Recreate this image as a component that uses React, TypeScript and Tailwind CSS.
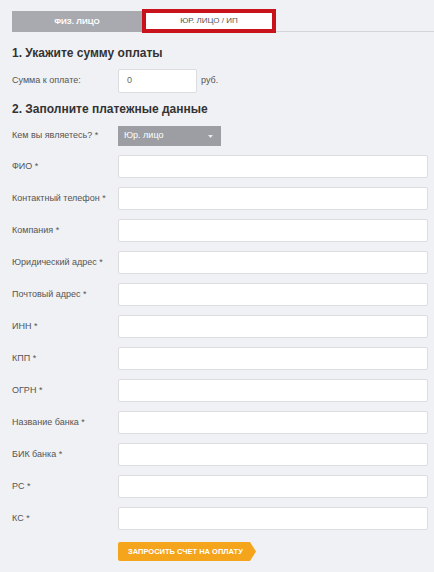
const fields = [
  "ФИО *",
  "Контактный телефон *",
  "Компания *",
  "Юридический адрес *",
  "Почтовый адрес *",
  "ИНН *",
  "КПП *",
  "ОГРН *",
  "Название банка *",
  "БИК банка *",
  "РС *",
  "КС *",
];

const Row = ({ label, children }: { label: string; children: React.ReactNode }) => {
  return (
    <div className="flex items-center">
      <div className="w-[106px] shrink-0 text-[9px] text-[#555]">{label}</div>
      {children}
    </div>
  );
};

export default function App() {
  return (
    <div
      className="w-[434px] h-[572px] bg-[#f0f1f4] text-[#333] overflow-hidden"
      style={{ fontFamily: '"Liberation Sans", Arial, sans-serif' }}
    >
      {/* tabs */}
      <div className="flex items-end pl-3 pt-[9px]">
        <div className="w-[130px] h-[21px] mb-[1px] bg-[#a8aaaf] flex items-center justify-center text-[8px] font-bold text-white uppercase">
          Физ. лицо
        </div>
        <div className="w-[134px] h-[24px] border-4 border-[#c8121c] bg-white flex items-center justify-center text-[8px] text-[#555] uppercase">
          Юр. лицо / ИП
        </div>
        <div className="flex-1 h-px bg-[#d3d5d9] mb-[1px]" />
      </div>

      <div className="pl-3 pr-[6px]">
        <h2 className="mt-[12px] text-[12px] font-bold leading-4 text-[#333]">
          1. Укажите сумму оплаты
        </h2>
        <div className="mt-[8px]">
          <Row label="Сумма к оплате:">
            <div className="w-[79px] h-[24px] bg-white border border-[#dcdde1] rounded-[2px] flex items-center pl-2 text-[9px] text-[#666]">
              0
            </div>
            <span className="ml-[4px] text-[9px] text-[#555]">руб.</span>
          </Row>
        </div>

        <h2 className="mt-[8px] text-[12px] font-bold leading-4 text-[#333]">
          2. Заполните платежные данные
        </h2>

        <div className="mt-[9px]">
          <Row label="Кем вы являетесь? *">
            <div className="w-[103px] h-[20px] bg-[#9c9ea3] flex items-center justify-between pl-[6px] pr-[8px] text-[9px] text-white">
              <span>Юр. лицо</span>
              <svg width="5" height="3" viewBox="0 0 5 3">
                <path d="M0 0h5L2.5 3z" fill="#e8e9eb" />
              </svg>
            </div>
          </Row>
        </div>

        <div className="mt-[9px] flex flex-col gap-[9px]">
          {fields.map((f) => (
            <Row key={f} label={f}>
              <div className="flex-1 h-[23px] bg-white border border-[#dcdde1] rounded-[2px]" />
            </Row>
          ))}
        </div>

        <div className="mt-[12px] ml-[106px]">
          <div className="w-[138px] h-[19px] bg-[#f5a51c] rounded-l-[2px] flex items-center pl-[10px] text-[7.5px] font-bold text-white uppercase [clip-path:polygon(0_0,calc(100%-6px)_0,100%_50%,calc(100%-6px)_100%,0_100%)]">
            Запросить счет на оплату
          </div>
        </div>
      </div>
    </div>
  );
}
